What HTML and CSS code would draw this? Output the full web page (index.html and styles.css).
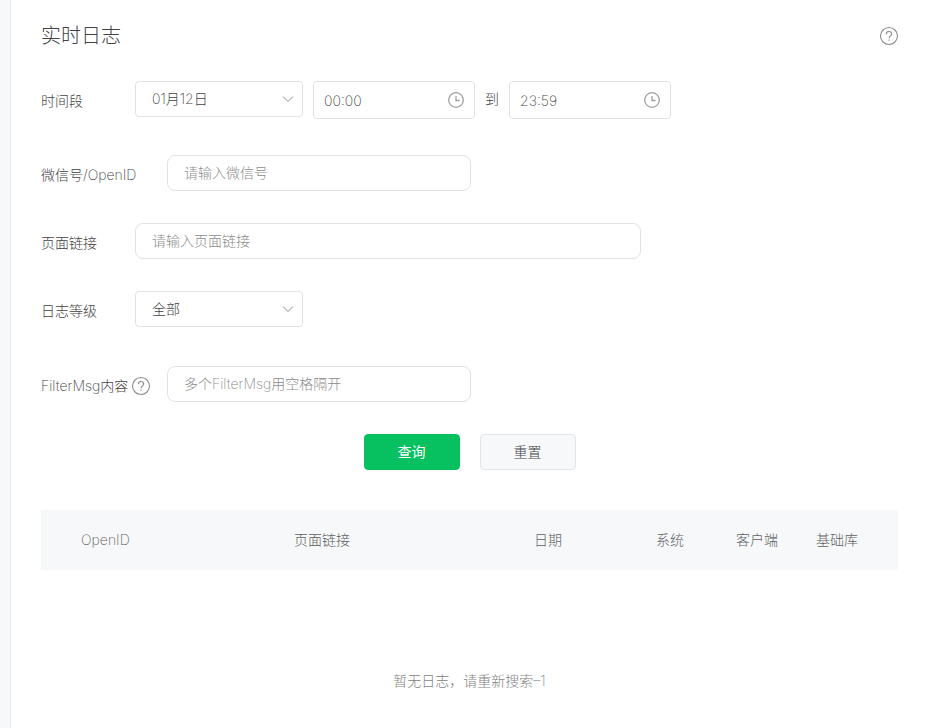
FILE: index.html
```html
<!DOCTYPE html>
<html lang="zh-CN">
<head>
  <meta charset="UTF-8" />
  <title>实时日志</title>
  <link rel="stylesheet" href="styles.css">
</head>
<body>

  <main class="panel">

    <header class="panel-header">
      <h1>实时日志</h1>
      <a href="#help" class="help" aria-label="帮助">
        <svg viewBox="0 0 20 20" aria-hidden="true"><circle cx="10" cy="10" r="8.5"/><path d="M7.3 8.2c0-1.6 1.1-2.7 2.7-2.7s2.6 1 2.6 2.4c0 1.9-2.5 2.1-2.5 4.3M10.1 13.4v1.3"/></svg>
      </a>
    </header>

    <form class="filters" onsubmit="event.preventDefault();">
      <div class="row row-time">
        <label class="label" for="day">时间段</label>
        <div class="time-range">
          <select id="day" class="field select">
            <option>01月12日</option>
          </select>
          <div class="time">
            <input type="text" value="00:00" aria-label="开始时间">
            <svg viewBox="0 0 16 16" aria-hidden="true"><circle cx="8" cy="8" r="7.3"/><path d="M8 4v4.5h3.5"/></svg>
          </div>
          <span class="to">到</span>
          <div class="time">
            <input type="text" value="23:59" aria-label="结束时间">
            <svg viewBox="0 0 16 16" aria-hidden="true"><circle cx="8" cy="8" r="7.3"/><path d="M8 4v4.5h3.5"/></svg>
          </div>
        </div>
      </div>

      <div class="row">
        <label class="label label-wide" for="openid">微信号/OpenID</label>
        <input type="text" id="openid" class="field text" placeholder="请输入微信号">
      </div>

      <div class="row">
        <label class="label" for="page">页面链接</label>
        <input type="text" id="page" class="field text text-long" placeholder="请输入页面链接">
      </div>

      <div class="row row-level">
        <label class="label" for="level">日志等级</label>
        <select id="level" class="field select">
          <option>全部</option>
        </select>
      </div>

      <div class="row">
        <div class="label label-wide">
          <label for="filter">FilterMsg内容</label>
          <a href="#filter-help" class="help" aria-label="FilterMsg说明">
            <svg viewBox="0 0 20 20" aria-hidden="true"><circle cx="10" cy="10" r="8.5"/><path d="M7.3 8.2c0-1.6 1.1-2.7 2.7-2.7s2.6 1 2.6 2.4c0 1.9-2.5 2.1-2.5 4.3M10.1 13.4v1.3"/></svg>
          </a>
        </div>
        <input type="text" id="filter" class="field text" placeholder="多个FilterMsg用空格隔开">
      </div>

      <div class="actions">
        <button type="submit" class="btn btn-primary">查询</button>
        <button type="reset" class="btn">重置</button>
      </div>
    </form>

    <table class="log-table">
      <colgroup>
        <col class="col-openid">
        <col>
        <col class="col-date">
        <col class="col-small">
        <col class="col-small">
        <col class="col-lib">
      </colgroup>
      <thead>
        <tr>
          <th>OpenID</th>
          <th>页面链接</th>
          <th>日期</th>
          <th>系统</th>
          <th>客户端</th>
          <th>基础库</th>
        </tr>
      </thead>
      <tbody>
        <tr>
          <td colspan="6">暂无日志，请重新搜索–1</td>
        </tr>
      </tbody>
    </table>

  </main>

</body>
</html>
```

FILE: styles.css
```css
* {
  box-sizing: border-box;
}
body {
  margin: 0;
  padding-left: 10px;
  background-color: #f6f8fa;
  font-family: Inter, "Noto Sans CJK SC", sans-serif;
  font-size: 14px;
  font-weight: 200;
  color: #424242;
}
input, select, button {
  font: inherit;
  color: inherit;
}
.panel {
  min-height: 100vh;
  padding: 20px 30px 0;
  border-left: 1px solid #e7e7eb;
  background: #fff;
}

/* 标题栏 */
.panel-header {
  display: flex;
  justify-content: space-between;
  align-items: center;
  height: 32px;
  margin-bottom: 29px;
}
h1 {
  margin: 0;
  font-size: 20px;
  font-weight: 200;
  line-height: 32px;
}
.help {
  display: flex;
}
.help svg {
  width: 20px;
  height: 20px;
  fill: none;
  stroke: #8c8c8c;
  stroke-width: 1.1;
}
.panel-header .help {
  margin-right: -1px;
}

/* 筛选条件 */
.filters {
  display: flex;
  flex-direction: column;
  gap: 28px;
}
.row {
  display: flex;
  align-items: flex-start;
}
.row-time {
  margin-bottom: 6px;
}
.row-level {
  margin-bottom: 7px;
}
.label {
  display: flex;
  align-items: center;
  flex: 0 0 94px;
  gap: 3px;
  line-height: 40px;
  white-space: nowrap;
}
.label-wide {
  flex-basis: 126px;
}
.field {
  height: 36px;
  padding: 0 16px 2px;
  border: 1px solid #e0e2e4;
  background-color: #fff;
}
.text {
  width: 304px;
  border-radius: 8px;
}
.text-long {
  width: 506px;
}
.select {
  width: 168px;
  border-radius: 4px;
  appearance: none;
  background-image: url("data:image/svg+xml,%3Csvg xmlns='http://www.w3.org/2000/svg' viewBox='0 0 12 8'%3E%3Cpath d='M1 1.5l5 5 5-5' fill='none' stroke='%238c8c8c'/%3E%3C/svg%3E");
  background-repeat: no-repeat;
  background-position: right 8px center;
  background-size: 12px 8px;
}
::placeholder {
  color: #8c8c8c;
  opacity: 1;
}
.time-range {
  display: flex;
  gap: 10px;
}
.time {
  display: flex;
  align-items: center;
  width: 162px;
  height: 38px;
  padding: 0 10px;
  border: 1px solid #dfe3e6;
  border-radius: 4px;
}
.time input {
  flex: 1;
  min-width: 0;
  padding: 0;
  border: 0;
  outline: none;
  background: none;
}
.time svg {
  width: 16px;
  height: 16px;
  fill: none;
  stroke: #a0a0a0;
  stroke-width: 1.3;
}
.to {
  line-height: 36px;
}
.actions {
  display: flex;
  justify-content: center;
  gap: 20px;
}
.btn {
  width: 96px;
  height: 36px;
  padding: 0 0 2px;
  border: 1px solid #e2e4e6;
  border-radius: 4px;
  background: #f6f8fa;
  cursor: pointer;
}
.btn-primary {
  border-color: #07c160;
  background: #07c160;
  color: #fff;
  font-weight: 400;
}

/* 日志列表 */
.log-table {
  width: 100%;
  margin-top: 40px;
  border-collapse: collapse;
  table-layout: fixed;
}
.col-openid {
  width: 253px;
}
.col-date {
  width: 122px;
}
.col-small {
  width: 80px;
}
.col-lib {
  width: 82px;
}
th {
  height: 60px;
  padding: 0 0 2px;
  background: #f6f8fa;
  font-weight: 200;
  text-align: left;
  color: #5f5f5f;
}
th:first-child {
  padding-left: 40px;
}
td {
  padding: 100px 0 36px;
  line-height: 22px;
  text-align: center;
  color: #828282;
}
```
